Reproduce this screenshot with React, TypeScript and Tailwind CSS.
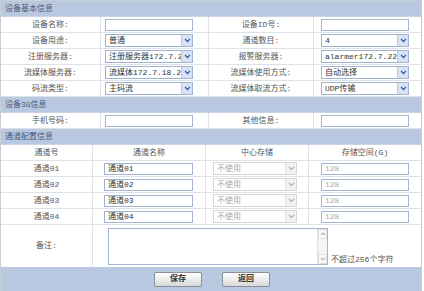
import React from "react";

const font = "font-['Liberation_Mono','Noto_Sans_CJK_SC',monospace]";

function Arrow({ disabled }: { disabled?: boolean }) {
  return (
    <div
      className={`ml-auto flex h-full w-[11px] shrink-0 items-center justify-center border-l ${
        disabled ? "border-[#e4e4e4] bg-[#f2f2f2]" : "border-[#b9c9e6] bg-[#d6e2f6]"
      }`}
    >
      <svg width="7" height="5" viewBox="0 0 7 5">
        <path d="M1 1 L3.5 3.5 L6 1" fill="none" stroke={disabled ? "#b8b8b8" : "#3b62a8"} strokeWidth="1.4" />
      </svg>
    </div>
  );
}

function Select({ value, w = 88, disabled }: { value: string; w?: number; disabled?: boolean }) {
  return (
    <div
      className={`flex h-[13px] items-center border ${
        disabled ? "border-[#d6d6d6] text-[#a8a8a8]" : "border-[#9fb2d2] text-[#333]"
      } bg-white`}
      style={{ width: w }}
    >
      <span className="min-w-0 flex-1 overflow-hidden whitespace-nowrap pl-[3px] leading-[11px]">{value}</span>
      <Arrow disabled={disabled} />
    </div>
  );
}

function Input({ value = "", w = 88, disabled }: { value?: string; w?: number; disabled?: boolean }) {
  return (
    <div
      className={`flex h-[12px] items-center overflow-hidden whitespace-nowrap border border-[#a3b5d3] bg-white pl-[3px] leading-[10px] ${
        disabled ? "text-[#aaa]" : "text-[#333]"
      }`}
      style={{ width: w }}
    >
      {value}
    </div>
  );
}

function Band({ title }: { title: string }) {
  return (
    <div className="flex h-[16px] items-center border-b border-[#c9d3e2] bg-[#b8c8e0] pl-[4px] text-[#4a5878]">
      {title}
    </div>
  );
}

const cell = "flex h-[16px] items-center border-b border-r border-[#dde1e8]";
const basic: [string, React.ReactNode, string, React.ReactNode][] = [
  ["设备名称:", <Input />, "设备ID号:", <Input />],
  ["设备用途:", <Select value="普通" />, "通道数目:", <Select value="4" />],
  ["注册服务器:", <Select value="注册服务器172.7.2" />, "报警服务器:", <Select value="alarmer172.7.22.1" />],
  ["流媒体服务器:", <Select value="流媒体172.7.18.21" />, "流媒体使用方式:", <Select value="自动选择" />],
  ["码流类型:", <Select value="主码流" />, "流媒体取流方式:", <Select value="UDP传输" />],
];

const channels = ["01", "02", "03", "04"];

export default function App() {
  return (
    <div className={`w-[422px] border border-[#c8ced8] bg-white text-[8px] text-[#555] ${font}`}>
      <Band title="设备基本信息" />
      <div className="grid grid-cols-[100px_108px_105px_107px]">
        {basic.map(([l1, c1, l2, c2]) => (
          <React.Fragment key={l1}>
            <div className={`${cell} justify-center`}>{l1}</div>
            <div className={`${cell} pl-[4px]`}>{c1}</div>
            <div className={`${cell} justify-center`}>{l2}</div>
            <div className={`${cell} pl-[7px] border-r-0`}>{c2}</div>
          </React.Fragment>
        ))}
      </div>
      <Band title="设备3G信息" />
      <div className="grid grid-cols-[100px_108px_105px_107px]">
        <div className={`${cell} justify-center`}>手机号码:</div>
        <div className={`${cell} pl-[4px]`}>
          <Input />
        </div>
        <div className={`${cell} justify-center`}>其他信息:</div>
        <div className={`${cell} pl-[7px] border-r-0`}>
          <Input />
        </div>
      </div>
      <Band title="通道配置信息" />
      <div className="grid grid-cols-[92px_113px_103px_112px]">
        <div className={`${cell} justify-center`}>通道号</div>
        <div className={`${cell} justify-center`}>通道名称</div>
        <div className={`${cell} justify-center`}>中心存储</div>
        <div className={`${cell} justify-center border-r-0`}>存储空间(G)</div>
        {channels.map((n) => (
          <React.Fragment key={n}>
            <div className={`${cell} justify-center`}>通道{n}</div>
            <div className={`${cell} pl-[11px]`}>
              <Input value={`通道${n}`} w={89} />
            </div>
            <div className={`${cell} pl-[7px]`}>
              <Select value="不使用" w={84} disabled />
            </div>
            <div className={`${cell} pl-[12px] border-r-0`}>
              <Input value="128" disabled />
            </div>
          </React.Fragment>
        ))}
      </div>
      <div className="flex h-[42px]">
        <div className="flex w-[92px] items-center justify-center border-r border-[#dde1e8]">备注:</div>
        <div className="flex flex-1 items-end pb-[2px] pl-[15px]">
          <div className="mb-[0px] flex h-[37px] w-[220px] border border-[#a3b5d3] bg-white">
            <div className="flex-1" />
            <div className="flex w-[10px] flex-col justify-between border-l border-[#e2e2e2] bg-[#f4f4f4]">
              <div className="flex h-[10px] items-center justify-center border border-[#dedede] bg-[#fafafa]">
                <svg width="6" height="4" viewBox="0 0 6 4">
                  <path d="M1 3 L3 1 L5 3" fill="none" stroke="#b5b5b5" strokeWidth="1.2" />
                </svg>
              </div>
              <div className="flex h-[10px] items-center justify-center border border-[#dedede] bg-[#fafafa]">
                <svg width="6" height="4" viewBox="0 0 6 4">
                  <path d="M1 1 L3 3 L5 1" fill="none" stroke="#b5b5b5" strokeWidth="1.2" />
                </svg>
              </div>
            </div>
          </div>
          <span className="ml-[3px] leading-[10px] text-[#555]">不超过256个字符</span>
        </div>
      </div>
      <div className="flex h-[24px] items-center justify-center gap-[20px] bg-[#b8c8e0] pl-[2px]">
        {["保存", "返回"].map((t) => (
          <button
            key={t}
            type="button"
            className="flex h-[15px] w-[48px] items-center justify-center rounded-[2px] border border-[#8a8f98] bg-gradient-to-b from-white to-[#d9d9d9] text-[8px] font-bold text-[#333]"
          >
            {t}
          </button>
        ))}
      </div>
    </div>
  );
}
